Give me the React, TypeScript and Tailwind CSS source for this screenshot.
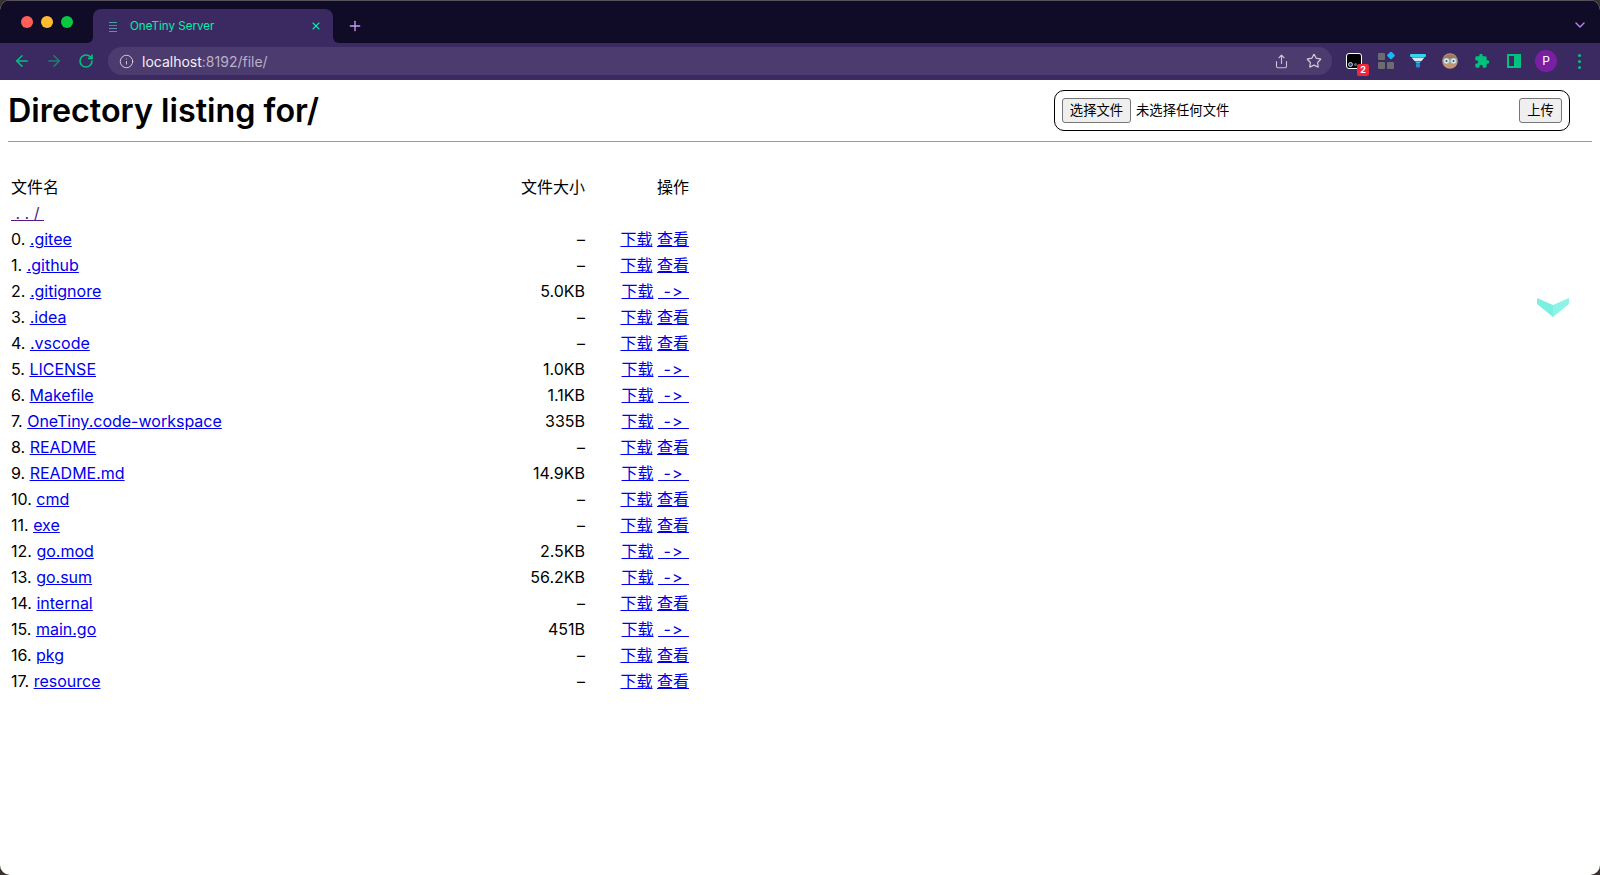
import React from 'react';
import { ArrowLeft, ArrowRight, RotateCw, Info, Share, Star, Plus, X, ChevronDown } from 'lucide-react';

const rows: { name: string; size: string; dir: boolean }[] = [
  { name: '.gitee', size: '–', dir: true },
  { name: '.github', size: '–', dir: true },
  { name: '.gitignore', size: '5.0KB', dir: false },
  { name: '.idea', size: '–', dir: true },
  { name: '.vscode', size: '–', dir: true },
  { name: 'LICENSE', size: '1.0KB', dir: false },
  { name: 'Makefile', size: '1.1KB', dir: false },
  { name: 'OneTiny.code-workspace', size: '335B', dir: false },
  { name: 'README', size: '–', dir: true },
  { name: 'README.md', size: '14.9KB', dir: false },
  { name: 'cmd', size: '–', dir: true },
  { name: 'exe', size: '–', dir: true },
  { name: 'go.mod', size: '2.5KB', dir: false },
  { name: 'go.sum', size: '56.2KB', dir: false },
  { name: 'internal', size: '–', dir: true },
  { name: 'main.go', size: '451B', dir: false },
  { name: 'pkg', size: '–', dir: true },
  { name: 'resource', size: '–', dir: true },
];

const Link = ({ children }: { children: React.ReactNode }) => (
  <a href="#" className="text-[#0000ee] underline">{children}</a>
);

const ToolbarIcons = () => (
  <div className="flex items-center">
    <div className="relative w-[16px] h-[16px] ml-[14px] mr-[16px] bg-black border border-white rounded-[3px]">
      <span className="absolute left-[1px] top-[8px] w-[5px] h-[5px] rounded-full border border-[#b7c6e6] bg-[#3a4a78]" />
      <span className="absolute left-[7px] top-[9px] w-[3px] h-[3px] rounded-full bg-[#666]" />
      <span className="absolute -right-[8px] -bottom-[8px] w-[12px] h-[12px] rounded-[2px] bg-[#f0283c] text-white text-[9px] leading-[12px] text-center font-bold">2</span>
    </div>
    <svg width="18" height="18" viewBox="0 0 18 18" className="mr-[14px]">
      <rect x="0" y="1" width="7" height="7" rx="1" fill="#6b6b70" />
      <rect x="0" y="10" width="7" height="7" rx="1" fill="#6b6b70" />
      <rect x="9" y="10" width="7" height="7" rx="1" fill="#6b6b70" />
      <rect x="10" y="0.5" width="6" height="6" rx="1" transform="rotate(45 13 3.5)" fill="#1fb4f5" />
    </svg>
    <svg width="16" height="14" viewBox="0 0 16 14" className="mr-[16px]">
      <rect x="0" y="0" width="16" height="3" rx="1.2" fill="#35d3ee" />
      <path d="M1.5 3.5h13l-3 3.5h-7z" fill="#d9e6ee" />
      <path d="M5 7.5h6l-1.5 2h-3z" fill="#35c7ee" />
      <circle cx="8" cy="11.5" r="2.2" fill="#2a8fc9" />
    </svg>
    <svg width="16" height="16" viewBox="0 0 16 16" className="mr-[16px]">
      <circle cx="8" cy="8" r="7.8" fill="#c49474" />
      <path d="M1 6c2-6.500 12-6.500 14 0z" fill="#9a7a62" />
      <circle cx="4.500" cy="8" r="3" fill="#d7eef0" stroke="#8fa0a8" strokeWidth="0.7" />
      <circle cx="11.500" cy="8" r="3" fill="#d7eef0" stroke="#8fa0a8" strokeWidth="0.7" />
      <circle cx="4.500" cy="8" r="1" fill="#445" />
      <circle cx="11.500" cy="8" r="1" fill="#445" />
    </svg>
    <svg width="16" height="16" viewBox="0 0 24 24" className="mr-[17px]" fill="#00c27c">
      <path d="M20.500 11H19V7a2 2 0 0 0-2-2h-4V3.500a2.500 2.500 0 0 0-5 0V5H4a2 2 0 0 0-2 2v3.800h1.500a2.700 2.700 0 0 1 0 5.400H2V20a2 2 0 0 0 2 2h3.800v-1.500a2.700 2.700 0 0 1 5.400 0V22H17a2 2 0 0 0 2-2v-4h1.500a2.500 2.500 0 0 0 0-5z" />
    </svg>
    <div className="w-[14px] h-[14px] border-2 border-[#00c27c] flex justify-end mr-[14px]">
      <div className="w-[5px] h-full bg-[#00c27c]" />
    </div>
    <div className="w-[22px] h-[22px] rounded-full bg-[#7b1fa2] text-white text-[12px] leading-[22px] text-center mr-[21px]">P</div>
    <div className="flex flex-col gap-[3px]">
      <span className="w-[3px] h-[3px] rounded-full bg-[#00c27c]" />
      <span className="w-[3px] h-[3px] rounded-full bg-[#00c27c]" />
      <span className="w-[3px] h-[3px] rounded-full bg-[#00c27c]" />
    </div>
  </div>
);

export default function App() {
  return (
    <div className="w-[1600px] h-[875px] bg-[#3a3230] overflow-hidden" style={{ fontFamily: 'Inter, "Noto Sans CJK SC", sans-serif' }}>
      <div className="relative h-full rounded-[10px] overflow-hidden bg-white">
        {/* tab strip */}
        <div className="h-[43px] bg-[#100c28] border-t border-[#55525c] flex items-end">
          <div className="flex gap-[8px] w-[93px] pl-[21px] self-start mt-[15px]">
            <span className="w-[12px] h-[12px] rounded-full bg-[#ff5f57]" />
            <span className="w-[12px] h-[12px] rounded-full bg-[#febc2e]" />
            <span className="w-[12px] h-[12px] rounded-full bg-[#0ac840]" />
          </div>
          <div className="relative w-[240px] h-[34px] bg-[#3b2a62] rounded-t-[8px] flex items-center pl-[16px] pr-[11px]">
            <span className="absolute -left-[6px] bottom-0 w-[6px] h-[6px] bg-[#3b2a62]">
              <span className="block w-full h-full bg-[#100c28] rounded-br-[6px]" />
            </span>
            <span className="absolute -right-[6px] bottom-0 w-[6px] h-[6px] bg-[#3b2a62]">
              <span className="block w-full h-full bg-[#100c28] rounded-bl-[6px]" />
            </span>
            <div className="w-[8px] flex flex-col gap-[2px] mr-[13px] mt-[1px]">
              <span className="h-[1px] bg-[#3fa58f]" />
              <span className="h-[1px] bg-[#b05a6a]" />
              <span className="h-[1px] bg-[#5a8fb0]" />
              <span className="h-[1px] bg-[#3fa58f]" />
            </div>
            <span className="text-[11.6px] text-[#00f0a8] flex-1 pt-[2px]">OneTiny Server</span>
            <X size={12} strokeWidth={2.2} className="text-[#00f0a8]" />
          </div>
          <Plus size={16} strokeWidth={2} className="text-[#c79bf2] ml-[14px] mb-[9px]" />
          <ChevronDown size={16} strokeWidth={2} className="text-[#b48ae8] ml-auto mr-[12px] mb-[10px]" />
        </div>
        {/* toolbar */}
        <div className="h-[37px] bg-[#3b2a62] border-b border-[#1f3a5a] flex items-center">
          <ArrowLeft size={18} strokeWidth={2} className="text-[#00c27c] ml-[13px]" />
          <ArrowRight size={18} strokeWidth={2} className="text-[#1f7f70] ml-[14px]" />
          <RotateCw size={16} strokeWidth={2.4} className="text-[#00c27c] ml-[15px]" />
          <div className="w-[1224px] h-[28px] ml-[14px] rounded-full bg-[#4c3b6e] flex items-center pl-[11px] pr-[10px]">
            <Info size={15} strokeWidth={1.6} className="text-[#d0cbd8]" />
            <span className="ml-[8px] text-[14px] text-[#f3f0f7]">localhost<span className="text-[#b9b1c8]">:8192/file/</span></span>
            <Share size={15} strokeWidth={1.8} className="text-[#c6c0d0] ml-auto mr-[17px]" />
            <Star size={16} strokeWidth={1.8} className="text-[#d0cbd8]" />
          </div>
          <ToolbarIcons />
        </div>
        {/* page */}
        <div className="p-[8px] pt-0">
          <div className="flex items-start justify-between pr-[22px] h-[61px]">
            <h1 className="text-[32.3px] leading-[37px] font-semibold mt-[12px] text-black">Directory listing for/</h1>
            <form className="mt-[10px] w-[516px] h-[41px] border border-black rounded-[10px] flex items-center pl-[7px] pr-[7px] text-[13.33px] text-black">
              <button type="button" className="h-[25px] w-[69px] bg-[#efefef] border border-[#767676] rounded-[3px] text-center">选择文件</button>
              <span className="ml-[5px]">未选择任何文件</span>
              <button type="button" className="ml-auto h-[25px] w-[43px] bg-[#efefef] border border-[#767676] rounded-[3px] text-center">上传</button>
            </form>
          </div>
          <hr className="border-t border-[#9a9a9a] mb-[31px]" />
          <table className="border-separate border-spacing-[2px] text-[16px] leading-[22px] text-black [font-variant-ligatures:none] [font-feature-settings:'calt'_0]">
            <thead>
              <tr className="h-[24px]">
                <td className="w-[479px] p-px">文件名</td>
                <td className="w-[95px] p-px text-right">文件大小</td>
                <td className="w-[102px] p-px text-right">操作</td>
              </tr>
            </thead>
            <tbody>
              <tr className="h-[24px]">
                <td className="p-px"><a href="#" className="text-[#551a8b] underline">&nbsp;.&nbsp;.&nbsp;/&nbsp;</a></td>
                <td className="p-px" />
                <td className="p-px" />
              </tr>
              {rows.map((r, i) => (
                <tr key={r.name} className="h-[24px]">
                  <td className="p-px">{i}. <Link>{r.name}</Link></td>
                  <td className="p-px text-right">{r.size}</td>
                  <td className="p-px text-right">
                    <Link>下载</Link>{' '}
                    {r.dir ? <Link>查看</Link> : <Link><span className="tracking-[1px]">&nbsp;-&gt;&nbsp;</span></Link>}
                  </td>
                </tr>
              ))}
            </tbody>
          </table>
        </div>
        {/* scroll hint */}
        <svg width="32" height="20" viewBox="0 0 32 20" className="absolute left-[1537px] top-[297px]">
          <path d="M0 1 L16 8 L16 20 L0 7 Z" fill="#7cf0e0" />
          <path d="M32 1 L16 8 L16 20 L32 7 Z" fill="#8df3e6" />
        </svg>
      </div>
    </div>
  );
}
